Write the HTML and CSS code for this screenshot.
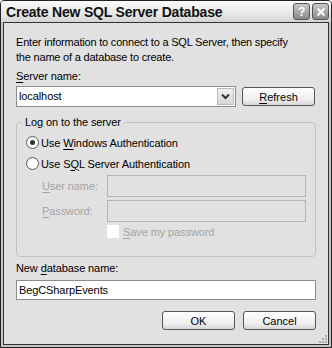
FILE: index.html
```html
<!DOCTYPE HTML>
<html>
<head>
  <title>Create New SQL Server Database</title>
  <meta charset="utf-8">
  <link rel="stylesheet" href="styles.css">
</head>
<body>
  <div class="window">
    <div class="titlebar">
      <span class="title">Create New SQL Server Database</span>
      <span class="cap-btn">?</span>
      <span class="cap-btn">
        <svg width="10" height="10" viewBox="0 0 10 10"><path d="M1.5 1.5 L8.5 8.5 M8.5 1.5 L1.5 8.5" stroke="#fff" stroke-width="2"/></svg>
      </span>
    </div>
    <div class="client">
      <p class="intro">Enter information to connect to a SQL Server, then specify<br>the name of a database to create.</p>

      <div class="label"><u>S</u>erver name:</div>
      <div class="row">
        <div class="combo">
          <span class="combo-text">localhost</span>
          <span class="combo-arrow">
            <svg width="9" height="7" viewBox="0 0 9 7"><path d="M1 1.5 L4.5 5 L8 1.5" fill="none" stroke="#333" stroke-width="2"/></svg>
          </span>
        </div>
        <button class="btn"><u>R</u>efresh</button>
      </div>

      <div class="group">
        <span class="legend">Log on to the server</span>
        <div class="radio-row">
          <span class="radio checked"></span>
          <span>Use <u>W</u>indows Authentication</span>
        </div>
        <div class="radio-row">
          <span class="radio"></span>
          <span>Use S<u>Q</u>L Server Authentication</span>
        </div>
        <div class="field-row">
          <span class="field-label"><u>U</u>ser name:</span>
          <span class="field"></span>
        </div>
        <div class="field-row">
          <span class="field-label"><u>P</u>assword:</span>
          <span class="field"></span>
        </div>
        <div class="check-row">
          <span class="check"></span>
          <span class="disabled"><u>S</u>ave my password</span>
        </div>
      </div>

      <div class="label db-label">New <u>d</u>atabase name:</div>
      <div class="textbox">BegCSharpEvents</div>

      <div class="buttons">
        <button class="btn">OK</button>
        <button class="btn">Cancel</button>
      </div>
      <span class="grip">
        <svg width="10" height="10" viewBox="0 0 10 10" fill="#aaa"><rect x="8" y="2" width="2" height="2"/><rect x="5" y="5" width="2" height="2"/><rect x="8" y="5" width="2" height="2"/><rect x="2" y="8" width="2" height="2"/><rect x="5" y="8" width="2" height="2"/><rect x="8" y="8" width="2" height="2"/></svg>
      </span>
    </div>
  </div>
</body>
</html>
```

FILE: styles.css
```css
* {
  box-sizing: border-box;
}
html, body {
  margin: 0;
  padding: 0;
  background: #fff;
}
body {
  font-family: "Liberation Sans", Arial, sans-serif;
  font-size: 11px;
  letter-spacing: -0.1px;
  color: #000;
}
u {
  text-decoration: underline;
  text-underline-offset: 2px;
}
.window {
  width: 332px;
  height: 348px;
  display: flex;
  flex-direction: column;
  border: 1px solid #222;
  border-radius: 4px 4px 0 0;
  background: #c4c4c4;
  padding: 0 2px 2px 2px;
}
.titlebar {
  height: 21px;
  display: flex;
  align-items: center;
  padding: 0 2px 0 5px;
  margin: 0 -2px;
  border-radius: 3px 3px 0 0;
  background: linear-gradient(#fbfbfb, #e8e8e8 60%, #d4d4d4);
}
.title {
  flex: 1;
  font-weight: bold;
  font-size: 14px;
  letter-spacing: -0.2px;
  color: #111;
}
.cap-btn {
  width: 17px;
  height: 17px;
  margin-left: 2px;
  display: flex;
  align-items: center;
  justify-content: center;
  border: 1px solid #555;
  border-radius: 3px;
  background: linear-gradient(#c8c8c8, #8a8a8a);
  color: #fff;
  font-weight: bold;
  font-size: 12px;
}
.client {
  flex: 1;
  position: relative;
  display: flex;
  flex-direction: column;
  border: 1px solid #333;
  background: #e1e1e1;
  padding: 12px 12px 0 12px;
}
.intro {
  margin: 0;
  line-height: 15px;
  letter-spacing: -0.2px;
}
.label {
  margin-top: 4px;
  line-height: 14px;
}
.row {
  display: flex;
  margin-top: 3px;
  gap: 6px;
}
.combo {
  width: 220px;
  height: 21px;
  display: flex;
  border: 1px solid #8c8c8c;
  background: #fff;
}
.combo-text {
  flex: 1;
  padding-left: 2px;
  line-height: 19px;
}
.combo-arrow {
  width: 17px;
  margin: 1px;
  display: flex;
  align-items: center;
  justify-content: center;
  border: 1px solid #bbb;
  background: linear-gradient(#f0f0f0, #d8d8d8);
}
.btn {
  width: 73px;
  height: 19px;
  margin: 0;
  padding: 0;
  font: inherit;
  color: #000;
  border: 1px solid #555;
  border-radius: 3px;
  background: linear-gradient(#fefefe, #eeeeee 70%, #d6d6d6);
}
.row .btn {
  margin-top: 1px;
}
.group {
  position: relative;
  margin-top: 15px;
  height: 135px;
  border: 1px solid #c2c2c2;
  border-radius: 4px;
  padding: 12px 8px 0 9px;
}
.legend {
  position: absolute;
  top: -8px;
  left: 5px;
  padding: 0 3px;
  background: #e1e1e1;
  line-height: 15px;
}
.radio-row {
  display: flex;
  align-items: center;
  height: 15px;
  margin-bottom: 6px;
  gap: 2px;
}
.radio {
  width: 13px;
  height: 13px;
  border: 1px solid #555;
  border-radius: 50%;
  background: #fff;
  display: flex;
  align-items: center;
  justify-content: center;
}
.radio.checked::after {
  content: "";
  width: 5px;
  height: 5px;
  border-radius: 50%;
  background: #333;
}
.field-row {
  display: flex;
  align-items: center;
  margin-bottom: 3px;
}
.radio-row + .radio-row {
  margin-bottom: 4px;
}
.field-label {
  width: 81px;
  padding-left: 16px;
  color: #a4a4a4;
}
.field {
  width: 199px;
  height: 22px;
  border: 1px solid #b4b4b4;
  background: #e1e1e1;
}
.check-row {
  display: flex;
  align-items: center;
  margin-left: 81px;
  gap: 4px;
}
.check {
  width: 12px;
  height: 13px;
  background: #fff;
}
.disabled {
  color: #a4a4a4;
}
.db-label {
  margin-top: 4px;
}
.textbox {
  height: 20px;
  margin-top: 5px;
  border: 1px solid #8c8c8c;
  background: #fff;
  padding-left: 2px;
  line-height: 18px;
}
.buttons {
  display: flex;
  justify-content: flex-end;
  gap: 8px;
  margin-top: 11px;
}
.grip {
  position: absolute;
  right: 1px;
  bottom: 1px;
  line-height: 0;
}
```
